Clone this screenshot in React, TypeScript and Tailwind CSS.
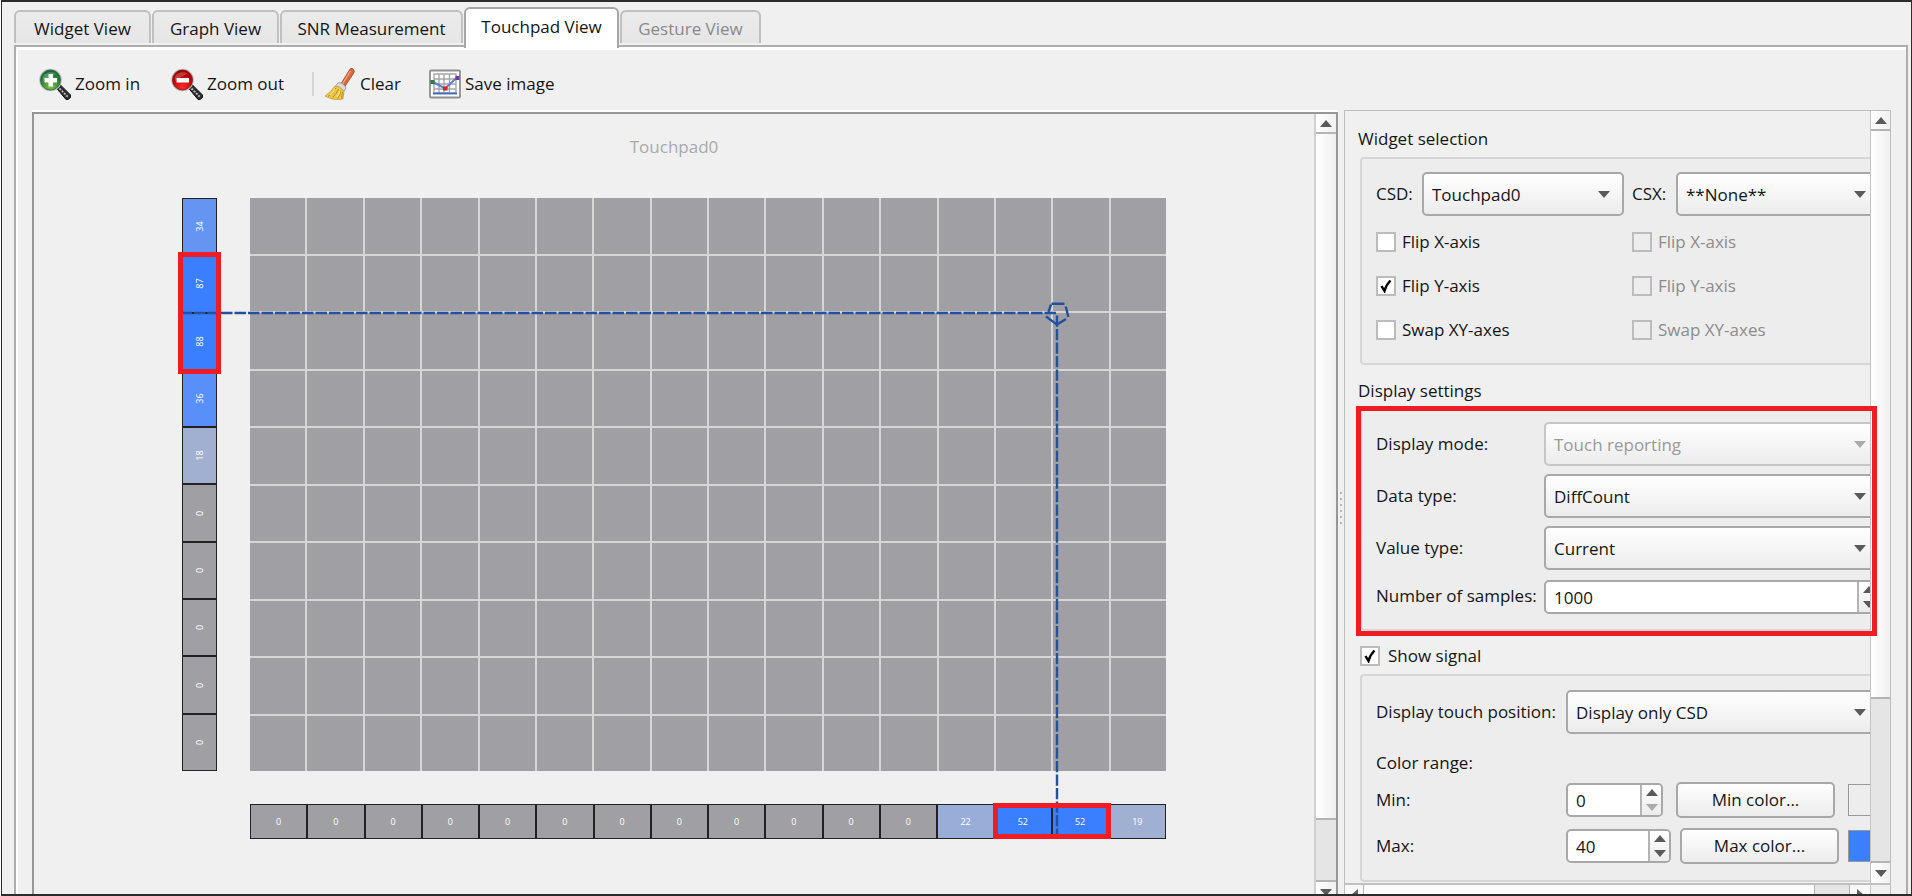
import React from 'react';

type Cell = { value: number; color: string };

const GREY = '#a09fa4';
const yCells: Cell[] = [
  { value: 34, color: '#6495f3' },
  { value: 87, color: '#3a7fff' },
  { value: 88, color: '#3a7fff' },
  { value: 36, color: '#588ff8' },
  { value: 18, color: '#a1b0d0' },
  ...Array.from({ length: 5 }, () => ({ value: 0, color: GREY })),
];
const xCells: Cell[] = [
  ...Array.from({ length: 12 }, () => ({ value: 0, color: GREY })),
  { value: 22, color: '#98add8' },
  { value: 52, color: '#3a7fff' },
  { value: 52, color: '#3a7fff' },
  { value: 19, color: '#a0b0d2' },
];

function Magnifier({ kind }: { kind: 'in' | 'out' }) {
  const id = `lens-${kind}`;
  const plus = kind === 'in';
  return (
    <svg width="32" height="32" viewBox="0 0 32 32" aria-hidden="true">
      <defs>
        <radialGradient id={id} cx="0.5" cy="0.85" r="0.8">
          <stop offset="0" stopColor={plus ? '#7cc243' : '#ff2a2a'} />
          <stop offset="0.6" stopColor={plus ? '#2f8a3a' : '#c40808'} />
          <stop offset="1" stopColor={plus ? '#116a36' : '#980000'} />
        </radialGradient>
      </defs>
      <path d="M17 19.500l4-3L31.500 27v2.500L29 31.500h-2z" fill="#2e2e2e" stroke="#111" strokeWidth="1" strokeLinejoin="round" />
      <path d="M20.500 20.500l8.500 8.500" stroke="#bdbdbd" strokeWidth="1.800" strokeDasharray="2 1.200" />
      <circle cx="11.500" cy="12" r="11.300" fill="#bcbcbc" />
      <circle cx="11.500" cy="12" r="10" fill={`url(#${id})`} stroke={plus ? '#2c5b38' : '#7a1414'} strokeWidth="0.800" />
      <path d="M4 9a8 7 0 0 1 13-3Q12 7 4 13z" fill="#fff" opacity="0.220" />
      {plus ? (
        <path d="M9.500 6h4.500v4h4v4.500h-4v4H9.500v-4h-4V10h4z" fill="#fff" />
      ) : (
        <path d="M5.500 10h12.500v4.500H5.500z" fill="#fff" />
      )}
    </svg>
  );
}

function Broom() {
  return (
    <svg width="32" height="32" viewBox="0 0 32 32" aria-hidden="true">
      <path d="M26 1q2-1.500 3.500.5t0 4L20.500 19l-4-2.500z" fill="#d9683a" stroke="#a8472a" strokeWidth="0.800" />
      <path d="M26.500 3L18.500 16" stroke="#f5a988" strokeWidth="1.300" />
      <path d="M12.500 16.500q2-3 5-1.500t4.500 5l-2 3.500-9-4z" fill="#d8dade" stroke="#888c94" strokeWidth="0.800" />
      <path d="M11 18q5 0 9 5l-1 8q-9 2-18-3 6-4 10-10z" fill="#ecc94b" stroke="#c79a26" strokeWidth="0.800" />
      <path d="M12 20Q9 26 4 28.500M14.500 21q-2 5-6 8.500M17 22.500q-1 5-3.500 8M18.500 24l-1 6.500" stroke="#b98a1c" strokeWidth="1" fill="none" />
      <path d="M11 21Q9 25 6 27M16 23q-1 4-3 6" stroke="#fdf0a0" strokeWidth="1" fill="none" />
    </svg>
  );
}

function ChartIcon() {
  return (
    <svg width="32" height="30" viewBox="0 0 32 30" aria-hidden="true">
      <rect x="1" y="1.500" width="30" height="27" rx="1" fill="#fff" stroke="#8e8e8e" strokeWidth="1.800" />
      <path d="M5 5h22v19H5zM5 10h22M5 15h22M5 20h22M10 5v19M15 5v19M20.500 5v19" stroke="#a6a6a6" strokeWidth="1.400" fill="none" />
      <path d="M4 24.500h24" stroke="#3d66c4" strokeWidth="1.800" />
      <path d="M4 13l12 6.500 12-11" stroke="#5b7fd6" strokeWidth="2" fill="none" />
      <path d="M1.500 11h4v4h-4z" fill="#2f7a3c" />
      <path d="M14 17.500h4.500v4H14z" fill="#d02323" />
      <path d="M26.500 7h4v4h-4z" fill="#6b3a94" />
    </svg>
  );
}

function Triangle({ dir, muted }: { dir: 'up' | 'down' | 'left' | 'right'; muted?: boolean }) {
  const d = {
    up: 'M0 7L6 0L12 7z',
    down: 'M0 0L6 7L12 0z',
    left: 'M8 0L1 6L8 12z',
    right: 'M1 0L8 6L1 12z',
  }[dir];
  const side = dir === 'left' || dir === 'right';
  return (
    <svg width={side ? 9 : 12} height={side ? 12 : 7} viewBox={side ? '0 0 9 12' : '0 0 12 7'} className="shrink-0" aria-hidden="true">
      <path d={d} fill={muted ? '#ababab' : '#5a5a5a'} />
    </svg>
  );
}

function ToolButton({ icon, label, className = '' }: { icon: React.ReactNode; label: string; className?: string }) {
  return (
    <button type="button" className={`flex items-center gap-1 ${className}`}>
      {icon}
      <span>{label}</span>
    </button>
  );
}

function Tab({ label, active, disabled, width }: { label: string; active?: boolean; disabled?: boolean; width: string }) {
  return (
    <button
      type="button"
      role="tab"
      aria-selected={!!active}
      disabled={disabled}
      className={`${width} rounded-t-md border-2 border-b-0 ${
        active
          ? 'relative z-10 -mb-[3px] h-[41px] border-[#a6a6a6] bg-white pb-[3px]'
          : 'mb-[2px] h-[33px] border-[#c0c0c0] bg-linear-to-b from-[#ebebeb] to-[#e6e6e6] pt-[2px]'
      } ${disabled ? 'text-[#8a8a8a]' : ''}`}
    >
      {label}
    </button>
  );
}

function Combo({ id, label, value, disabled, className = '' }: { id: string; label?: string; value: string; disabled?: boolean; className?: string }) {
  return (
    <div className={`relative h-11 ${className}`}>
      <select
        id={id}
        aria-label={label}
        disabled={disabled}
        className={`h-full w-full appearance-none rounded-[5px] border-2 bg-linear-to-b from-white to-[#ececec] pt-[2px] pl-2 opacity-100 ${
          disabled ? 'border-[#c6c6c6] text-[#9a9a9a]' : 'border-[#a8a8a8]'
        }`}
      >
        <option>{value}</option>
      </select>
      <span className="pointer-events-none absolute inset-y-0 right-[14px] flex items-center">
        <Triangle dir="down" muted={disabled} />
      </span>
    </div>
  );
}

function Spin({ id, value, className = '', minReached }: { id: string; value: string; className?: string; minReached?: boolean }) {
  return (
    <div className={`flex h-[34px] overflow-hidden rounded-[5px] border-2 border-[#a8a8a8] bg-white ${className}`}>
      <input id={id} defaultValue={value} className="w-0 min-w-0 flex-1 bg-transparent pt-[2px] pl-2 outline-none" />
      <div className="flex w-[21px] flex-col border-l-2 border-[#b4b4b4] bg-linear-to-b from-white to-[#ececec]">
        <button type="button" aria-label="Increase" className="flex flex-1 items-center justify-center">
          <Triangle dir="up" />
        </button>
        <button type="button" aria-label="Decrease" className="flex flex-1 items-center justify-center">
          <Triangle dir="down" muted={minReached} />
        </button>
      </div>
    </div>
  );
}

function Check({ label, checked, disabled, className = 'gap-[6px]' }: { label: string; checked?: boolean; disabled?: boolean; className?: string }) {
  return (
    <label className={`flex items-center ${className} ${disabled ? 'text-[#8c8c8c]' : ''}`}>
      <span className="relative flex size-5 items-center justify-center">
        <input
          type="checkbox"
          defaultChecked={checked}
          disabled={disabled}
          className={`peer size-5 appearance-none border-2 border-[#bcbcbc] ${disabled ? 'bg-[#ededed]' : 'bg-white'}`}
        />
        <svg width="12" height="14" viewBox="0 0 12 14" className="pointer-events-none absolute hidden peer-checked:block" aria-hidden="true">
          <path d="M1.500 7l3 5Q6 6 10.500 1.500" fill="none" stroke="#000" strokeWidth="2.400" />
        </svg>
      </span>
      <span>{label}</span>
    </label>
  );
}

function Group({ children, className = '' }: { children: React.ReactNode; className?: string }) {
  return <div className={`ml-[15px] w-[536px] rounded-[4px] border-2 border-[#d6d6d6] bg-[#ededed] px-[14px] ${className}`}>{children}</div>;
}

const scrollButton = 'flex h-5 shrink-0 items-center justify-center bg-linear-to-r from-white to-[#f0f0f0]';

function TouchpadChart() {
  return (
    <div className="relative mx-auto mt-[39px] grid w-[984px] shrink-0 grid-cols-[35px_1fr] gap-[33px] text-[9px] leading-none text-white">
      <div className="flex h-[573px] flex-col">
        {yCells.map((c, i) => (
          <div key={i} className="flex flex-1 items-center justify-center border border-[#222]" style={{ backgroundColor: c.color }}>
            <span className="-rotate-90">{c.value}</span>
          </div>
        ))}
      </div>
      <div className="grid grid-cols-16 grid-rows-10 gap-[2px] bg-[#d6d6d6]">
        {Array.from({ length: 160 }, (_, i) => (
          <div key={i} className="bg-[#a09fa4]" />
        ))}
      </div>
      <div className="col-start-2 flex h-[35px]">
        {xCells.map((c, i) => (
          <div key={i} className="flex flex-1 items-center justify-center border border-[#222]" style={{ backgroundColor: c.color }}>
            {c.value}
          </div>
        ))}
      </div>
      <svg className="absolute inset-0" width="984" height="641" viewBox="0 0 984 641" aria-hidden="true">
        <g fill="none" stroke="#2450a0" strokeWidth="2.400">
          <path d="M874 115H0" strokeDasharray="11.500 2" />
          <path d="M875 117.500V641" strokeDasharray="11.300 2.200" />
          <path d="M869.500 105.800H882.500M883.800 108.500L886.300 119M884 121L875 126.600L864 118.500M866.500 114L869 106.500" />
        </g>
      </svg>
      <div className="absolute top-[54px] -left-1 h-[122px] w-[43px] border-[5px] border-[#ee1c24]" />
      <div className="absolute top-[605px] left-[811px] h-9 w-[118px] border-[5px] border-[#ee1c24]" />
    </div>
  );
}

function CanvasPane() {
  return (
    <div className="flex min-w-0 flex-1 border-t-2 border-white">
      <div className="flex min-w-0 flex-1 border-2 border-[#979797]">
        <div className="flex min-w-0 flex-1 flex-col overflow-hidden pt-[21px]">
          <h2 className="text-center leading-6 text-[#a9a9a9]">Touchpad0</h2>
          <TouchpadChart />
        </div>
        <div className="flex w-[22px] flex-col border-l-2 border-[#d0d0d0]">
          <button type="button" aria-label="Scroll up" className={`${scrollButton} border-b-2 border-[#b4b4b4]`}>
            <Triangle dir="up" />
          </button>
          <div className="flex-1 bg-linear-to-r from-white to-[#f0f0f0]" />
          <div className="h-16 border-y-2 border-[#b4b4b4] bg-[#e5e5e5]" />
          <button type="button" aria-label="Scroll down" className={scrollButton}>
            <Triangle dir="down" />
          </button>
        </div>
      </div>
    </div>
  );
}

function SettingsPane() {
  return (
    <div className="relative w-[547px] shrink-0 border border-[#bdbdbd]">
      <div className="flex">
        <div className="h-[772px] min-w-0 flex-1 overflow-hidden">
          <h3 className="pt-4 pb-[6px] pl-[13px] leading-6">Widget selection</h3>
          <Group className="h-[208px] pt-[13px]">
            <div className="flex items-center">
              <label htmlFor="csd" className="w-[46px]">CSD:</label>
              <Combo id="csd" value="Touchpad0" className="w-[202px]" />
              <label htmlFor="csx" className="ml-2 w-[44px]">CSX:</label>
              <Combo id="csx" value="**None**" className="flex-1" />
            </div>
            <div className="mt-1 grid auto-rows-[44px] grid-cols-[256px_1fr]">
              <Check label="Flip X-axis" />
              <Check label="Flip X-axis" disabled />
              <Check label="Flip Y-axis" checked />
              <Check label="Flip Y-axis" disabled />
              <Check label="Swap XY-axes" />
              <Check label="Swap XY-axes" disabled />
            </div>
          </Group>

          <h3 className="pt-[14px] pb-1 pl-[13px] leading-6">Display settings</h3>
          <Group className="h-[224px] pt-[13px]">
            <div className="grid grid-cols-[168px_1fr] items-center gap-y-2">
              <label htmlFor="mode">Display mode:</label>
              <Combo id="mode" value="Touch reporting" disabled />
              <label htmlFor="data">Data type:</label>
              <Combo id="data" value="DiffCount" />
              <label htmlFor="vtype">Value type:</label>
              <Combo id="vtype" value="Current" />
              <label htmlFor="samples" className="whitespace-nowrap">Number of samples:</label>
              <Spin id="samples" value="1000" className="mt-[2px]" />
            </div>
          </Group>

          <div className="flex h-[43px] items-center pt-[7px] pl-[15px]">
            <Check label="Show signal" checked className="gap-2" />
          </div>
          <Group className="h-[208px] pt-[14px]">
            <div className="flex items-center">
              <label htmlFor="pos" className="w-[190px] whitespace-nowrap">Display touch position:</label>
              <Combo id="pos" value="Display only CSD" className="flex-1" />
            </div>
            <div className="mt-[17px] leading-6">Color range:</div>
            <div className="mt-[7px] flex h-9 items-center">
              <label htmlFor="min" className="w-[190px]">Min:</label>
              <Spin id="min" value="0" className="w-[97px]" minReached />
              <button type="button" className="ml-[13px] h-9 w-[159px] rounded-[5px] border-2 border-[#a8a8a8] bg-linear-to-b from-white to-[#ececec]">Min color...</button>
              <div className="ml-[13px] h-8 w-8 border border-[#999] bg-[#ededed]" />
            </div>
            <div className="mt-[10px] flex h-9 items-center">
              <label htmlFor="max" className="w-[190px]">Max:</label>
              <Spin id="max" value="40" className="w-[105px]" />
              <button type="button" className="ml-[9px] h-9 w-[159px] rounded-[5px] border-2 border-[#a8a8a8] bg-linear-to-b from-white to-[#ececec]">Max color...</button>
              <div className="ml-[9px] h-8 w-8 border border-[#999] bg-[#3a7fff]" />
            </div>
          </Group>
        </div>
        <div className="flex w-5 flex-col border-l border-[#c4c4c4]">
          <button type="button" aria-label="Scroll up" className={`${scrollButton} border-b-2 border-[#b4b4b4]`}>
            <Triangle dir="up" />
          </button>
          <div className="flex-1 bg-linear-to-r from-white to-[#f0f0f0]" />
          <div className="h-[166px] border-y-2 border-[#b4b4b4] bg-[#e5e5e5]" />
          <button type="button" aria-label="Scroll down" className={scrollButton}>
            <Triangle dir="down" />
          </button>
        </div>
      </div>
      <div className="flex h-5 border-t-2 border-[#c0c0c0]">
        <button type="button" aria-label="Scroll left" className="flex w-[19px] justify-center border-r border-[#b4b4b4] bg-[#f8f8f8] pt-1">
          <Triangle dir="left" />
        </button>
        <div className="flex-1 bg-[#fbfbfb]" />
        <div className="w-9 border-x border-[#b4b4b4] bg-[#e5e5e5]" />
        <button type="button" aria-label="Scroll right" className="flex w-5 justify-center bg-[#f8f8f8] pt-1">
          <Triangle dir="right" />
        </button>
        <div className="w-5 border-l border-[#c4c4c4]" />
      </div>
      <div className="pointer-events-none absolute top-[295px] left-[11px] h-[230px] w-[521px] border-[5px] border-[#ee1c24]" />
    </div>
  );
}

export default function App() {
  return (
    <div className="h-screen overflow-hidden bg-white pl-px">
      <div
        className="flex h-full flex-col overflow-hidden border-t-2 border-r border-b-2 border-l border-[#2c2c2c] bg-[#f0f0f0] text-[17px] text-[#151515]"
        style={{ fontFamily: '"Open Sans", "Noto Sans", sans-serif' }}
      >
        <div role="tablist" className="flex h-[43px] shrink-0 items-end gap-px pl-3">
          <Tab label="Widget View" width="w-[137px]" />
          <Tab label="Graph View" width="w-[127px]" />
          <Tab label="SNR Measurement" width="w-[183px]" />
          <Tab label="Touchpad View" width="w-[155px]" active />
          <Tab label="Gesture View" width="w-[141px]" disabled />
        </div>
        <div className="mr-[3px] ml-3 shrink-0 border-x-2 border-t-2 border-[#adadad]">
          <div className="border-t-[3px] border-l-2 border-white pl-[14px]">
            <div className="flex h-[60px] items-center pt-2 pl-[7px]">
              <ToolButton icon={<Magnifier kind="in" />} label="Zoom in" className="w-[132px]" />
              <ToolButton icon={<Magnifier kind="out" />} label="Zoom out" className="w-[141px]" />
              <div className="h-6 w-[2px] bg-[#d4d4d4]" />
              <ToolButton icon={<Broom />} label="Clear" className="ml-[10px] w-[105px]" />
              <ToolButton icon={<ChartIcon />} label="Save image" />
            </div>
            <div className="flex">
              <CanvasPane />
              <div className="flex w-[6px] flex-col items-center gap-1 pt-[382px]">
                {Array.from({ length: 6 }, (_, i) => (
                  <div key={i} className="size-[2px] bg-[#bbb]" />
                ))}
              </div>
              <SettingsPane />
              <div className="w-[15px] shrink-0" />
            </div>
          </div>
        </div>
      </div>
    </div>
  );
}
